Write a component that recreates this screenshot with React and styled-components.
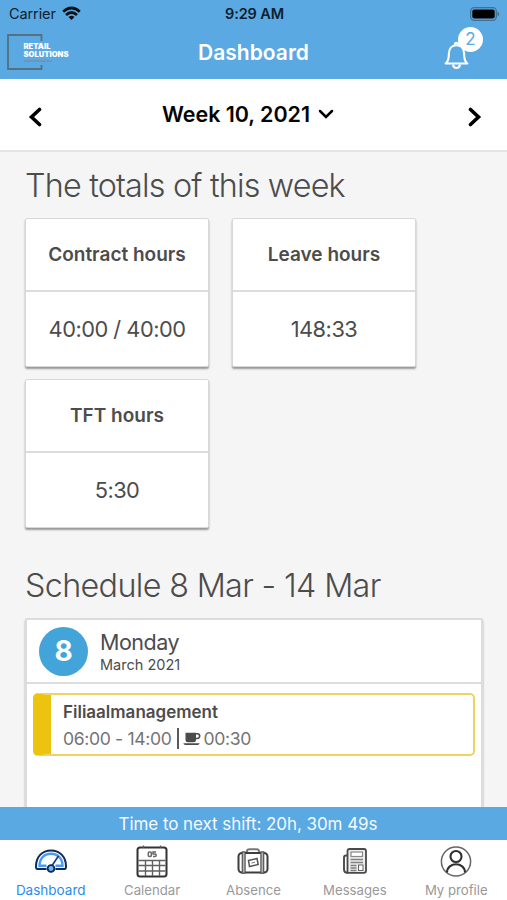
import React from 'react';
import styled, { createGlobalStyle } from 'styled-components';

const GlobalStyle = createGlobalStyle`
  * { box-sizing: border-box; }
  body { margin: 0; background: #f5f5f5; }
  svg { display: block; flex: none; }
`;

const Screen = styled.div`
  display: flex;
  flex-direction: column;
  width: 507px;
  height: 900px;
  overflow: hidden;
  background: #f5f5f5;
  color: #4c4c4c;
  font-family: Inter, 'Liberation Sans', sans-serif;
`;

const Label = styled.span`
  display: block;
  white-space: nowrap;
  font-size: ${(p) => p.$size}px;
  font-weight: ${(p) => p.$weight || 400};
  letter-spacing: ${(p) => p.$track || 0}px;
  line-height: ${(p) => p.$line || p.$size * 1.2}px;
  color: ${(p) => p.$color || 'inherit'};
`;

const Header = styled.header`
  flex: none;
  height: 79px;
  background: #5aa9e2;
`;

const StatusBar = styled.div`
  display: grid;
  grid-template-columns: 1fr auto 1fr;
  align-items: center;
  height: 27px;
  padding: 0 7px 0 9px;
  color: #10202c;
`;

const Carrier = styled.div`
  display: flex;
  align-items: center;
  gap: 6px;
`;

const BatterySlot = styled.div`
  display: flex;
  justify-content: flex-end;
`;

const NavBar = styled.div`
  display: grid;
  grid-template-columns: 1fr auto 1fr;
  align-items: center;
  height: 51px;
  padding: 0 7px;
`;

const Logo = styled.svg`
  margin-bottom: 2px;
  font-family: Inter, sans-serif;
  font-weight: 900;
`;

const BellButton = styled.div`
  position: relative;
  justify-self: end;
  width: 40px;
  height: 50px;
  margin-right: 17px;
  padding: 13px 0 0 1px;
`;

const Badge = styled.span`
  position: absolute;
  top: -1px;
  right: 0;
  display: flex;
  align-items: center;
  justify-content: center;
  width: 25px;
  height: 25px;
  border-radius: 50%;
  background: #fff;
`;

const WeekBar = styled.div`
  flex: none;
  display: flex;
  align-items: center;
  justify-content: space-between;
  height: 73px;
  padding: 4px 25px 0 28px;
  border-bottom: 2px solid #e4e4e4;
  background: #fff;
  color: #050505;
`;

const WeekPicker = styled.div`
  display: flex;
  align-items: center;
  gap: 8px;
  padding: 0 14px 4px 0;
`;

const Content = styled.main`
  flex: 1;
  min-height: 0;
  overflow: hidden;
  padding: 14px 24px 0 25px;
`;

const Totals = styled.section`
  display: grid;
  grid-template-columns: 184px 184px;
  column-gap: 23px;
  row-gap: 12px;
  margin: 12px 0 38px;
`;

const Card = styled.div`
  border: 1px solid #d8d8d8;
  border-radius: 2px;
  background: #fff;
  box-shadow: 0 2px 2px rgba(0, 0, 0, 0.38);
`;

const TotalCard = styled(Card)`
  height: 149px;
`;

const TotalCell = styled.div`
  display: flex;
  align-items: center;
  justify-content: center;
  height: ${(p) => (p.$head ? 73 : 74)}px;
  padding-top: ${(p) => (p.$head ? 1 : 0)}px;
  border-bottom: ${(p) => (p.$head ? '2px solid #dcdcdc' : '0')};
`;

const DayCard = styled(Card)`
  width: 458px;
  height: 220px;
  margin-top: 12px;
  border: 2px solid #dcdcdc;
`;

const DayHead = styled.div`
  display: flex;
  align-items: center;
  gap: 12px;
  height: 64px;
  padding: 0 0 0 12px;
  border-bottom: 2px solid #dcdcdc;
`;

const DayTitle = styled.div`
  padding-top: 2px;
`;

const DayNumber = styled.div`
  display: flex;
  align-items: center;
  justify-content: center;
  width: 49px;
  height: 49px;
  padding-top: 2px;
  border-radius: 50%;
  background: #42a4d8;
`;

const Shift = styled.div`
  height: 63px;
  margin: 9px 6px 0 6px;
  padding: 7px 0 0 12px;
  border: 2px solid #f0d264;
  border-left: 18px solid #ecc30f;
  border-radius: 5px;
`;

const ShiftTimes = styled.div`
  display: flex;
  align-items: center;
  margin-top: 6px;
`;

const Divider = styled.span`
  width: 2px;
  height: 21px;
  margin: 0 4px 0 5px;
  background: #5a5a5a;
`;

const BreakTime = styled.div`
  display: flex;
  align-items: center;
  gap: 3px;
`;

const Countdown = styled.div`
  flex: none;
  display: flex;
  align-items: center;
  justify-content: center;
  height: 33px;
  padding: 1px 11px 0 0;
  background: #5aa9e2;
`;

const TabBar = styled.nav`
  flex: none;
  display: grid;
  grid-template-columns: repeat(5, 1fr);
  height: 60px;
  background: #fff;
`;

const Tab = styled.div`
  display: flex;
  flex-direction: column;
  align-items: center;
  padding-top: 5px;
  gap: 3px;
`;

const WifiIcon = () => (
  <svg width="19" height="15" viewBox="0 0 19 15" fill="none" stroke="#0b1116" strokeWidth="2.7">
    <path d="M1.2 5.7Q9.5-1.7 17.8 5.7" />
    <path d="M4 9Q9.5 4 15 9" />
    <path d="M6.5 11Q9.5 8.7 12.5 11L9.5 14Z" fill="#0b1116" stroke="none" />
  </svg>
);

const BatteryIcon = () => (
  <svg width="30" height="14" viewBox="0 0 30 14">
    <rect x=".7" y=".7" width="25.6" height="12.6" rx="3.5" fill="none" stroke="#3f7192" strokeWidth="1.3" />
    <rect x="2.3" y="2.4" width="22.4" height="9.2" rx="2" fill="#000" />
    <path d="M27.5 4.6Q29.3 5.2 29.3 7T27.5 9.4Z" fill="#3f7192" />
  </svg>
);

const BrandLogo = () => (
  <Logo width="64" height="36" viewBox="0 0 64 36">
    <path d="M34.5 7V1H1v34h33.500v-4" fill="none" stroke="#56707f" strokeWidth="1.800" />
    <path d="M17 27h28" stroke="#718998" strokeWidth="1" />
    <text x="16.500" y="15" fontSize="7" fill="#fff" textLength="27" lengthAdjust="spacingAndGlyphs">RETAIL</text>
    <text x="16.500" y="23" fontSize="7" fill="#fff" textLength="45" lengthAdjust="spacingAndGlyphs">SOLUTIONS</text>
  </Logo>
);

const BellIcon = () => (
  <svg width="26" height="29" viewBox="0 0 26 29" fill="none" stroke="#fff" strokeWidth="2.100" strokeLinejoin="round">
    <path d="M1.600 22.500C5.300 20 4.500 16 5 11.500 5.400 7 8.500 4.200 12.500 4.200S19.600 7 20 11.500C20.500 16 19.700 20 23.400 22.500Z" />
    <path d="M11 4V2.500Q12.500 1 14 2.500V4" />
    <path d="M9 23.500Q9.500 27 12.500 27T16 23.500" />
  </svg>
);

const Chevron = ({ width, height, d, stroke }) => (
  <svg width={width} height={height} viewBox={`0 0 ${width} ${height}`} fill="none" stroke="#000" strokeWidth={stroke} strokeLinecap="round">
    <path d={d} />
  </svg>
);

const CupIcon = () => (
  <svg width="18" height="14" viewBox="0 0 18 14" fill="#4b4b4b">
    <path d="M2.500 .8h10.500v7q0 2.500-2.500 2.500h-5.500Q2.500 10.300 2.500 7.800Z" />
    <path d="M12.500 1.800h1.800q2.400 0 2.400 2.300T14 6.500h-1.500" fill="none" stroke="#4b4b4b" strokeWidth="1.600" />
    <path d="M.3 11.300h16.400q-.6 1.700-2 1.700h-12.400q-1.400 0-2-1.700Z" />
  </svg>
);

const GaugeIcon = () => (
  <svg width="32" height="34" viewBox="0 0 32 34" fill="none" stroke="#0c2c57">
    <path d="M11.500 24H2.500Q1 24 1 21.500C1 12 7 5.500 16 5.500s15 6.500 15 16Q31 24 29.500 24H20.500" fill="#fff" strokeWidth="2" />
    <path d="M11.500 20.800H4.500C4.500 13.500 9 8.800 16 8.800S27.500 13.500 27.500 20.800H20.500" stroke="#4a9bf7" strokeWidth="2.400" />
    <path d="M16 22L23.500 11" stroke="#0f3e7d" strokeWidth="1.600" />
    <circle cx="16" cy="23.500" r="3.400" fill="#75b6ff" strokeWidth="1.900" />
  </svg>
);

const CalendarIcon = () => (
  <svg width="32" height="34" viewBox="0 0 32 34" fill="none" stroke="#333" strokeWidth="2">
    <rect x="1.500" y="2.500" width="29" height="29" rx="2.500" />
    <path d="M7.500 .5v2.500M24.500 .5v2.500" stroke="#555" strokeWidth="1.300" />
    <path d="M2.500 15.500h27M2.500 20.500h27M2.500 26h27M9.500 15.500v15.500M16.500 15.500v15.500M23.500 15.500v15.500" stroke="#606060" strokeWidth="1.400" />
    <rect x="12.300" y="7" width="3" height="4.500" rx="1" stroke="#666" strokeWidth="1.500" />
    <path d="M20 7h-3v2h2.200q1 0 1 1.200t-1.200 1.300h-2" stroke="#666" strokeWidth="1.500" />
  </svg>
);

const SuitcaseIcon = () => (
  <svg width="32" height="34" viewBox="0 0 32 34" fill="none" stroke="#3d3d3d">
    <path d="M10 8V6.500Q10 4.200 12.500 4.200h7Q22 4.200 22 6.500v1.500" stroke="#777" strokeWidth="2" />
    <rect x="1.500" y="8" width="29" height="19.500" rx="3.500" fill="#fff" strokeWidth="2" />
    <path d="M6.700 6.200v22.500M25.300 6.200v22.500" stroke="#555" strokeWidth="4" />
    <path d="M6.700 7.500v20M25.300 7.500v20" stroke="#b5b5b5" strokeWidth="1.600" />
    <path d="M11.500 15.500l8.500-2 1.200 6-8.700 2Z" stroke="#555" strokeWidth="1.500" />
    <path d="M14.500 18l3.500-.8" stroke="#777" />
  </svg>
);

const NewsIcon = () => (
  <svg width="32" height="34" viewBox="0 0 32 34" fill="none" stroke="#4a4a4a">
    <path d="M8.500 10.500H7Q5 10.500 5 12.500v12q0 3.300 3.500 3.300" strokeWidth="1.900" />
    <path d="M8.500 27.800V6q0-2 2-2h14.500q2 0 2 2v19.800q0 2-2 2Z" fill="#eee" strokeWidth="1.800" />
    <rect x="12" y="7" width="11.500" height="4.500" fill="#fff" stroke="#888" strokeWidth="1.200" />
    <path d="M11.500 14.500h12.500M11.500 17.500h12.500M11.500 20.500h6M11.500 23h6M11.500 25.500h6" stroke="#808080" strokeWidth="1.300" />
    <rect x="19.500" y="20" width="4.500" height="5.500" fill="#fff" stroke="#666" />
  </svg>
);

const ProfileIcon = () => (
  <svg width="32" height="34" viewBox="0 0 32 34" fill="none" stroke="#303030">
    <circle cx="16" cy="16.500" r="14.600" stroke="#666" strokeWidth="1.500" />
    <circle cx="16" cy="11.500" r="5.500" strokeWidth="2.100" />
    <path d="M7 27.500C7 16.500 25 16.500 25 27.500" strokeWidth="2.100" />
  </svg>
);

const totals = [
  { name: 'Contract hours', value: '40:00 / 40:00' },
  { name: 'Leave hours', value: '148:33' },
  { name: 'TFT hours', value: '5:30' },
];

const tabs = [
  { name: 'Dashboard', Icon: GaugeIcon, color: '#2b8cf0', size: 13.5 },
  { name: 'Calendar', Icon: CalendarIcon },
  { name: 'Absence', Icon: SuitcaseIcon },
  { name: 'Messages', Icon: NewsIcon },
  { name: 'My profile', Icon: ProfileIcon },
];

export default function App() {
  return (
    <Screen>
      <GlobalStyle />
      <Header>
        <StatusBar>
          <Carrier>
            <Label $size={14.5} $track={-0.1}>Carrier</Label>
            <WifiIcon />
          </Carrier>
          <Label $size={14.5} $weight={600} $track={-0.1}>9:29 AM</Label>
          <BatterySlot><BatteryIcon /></BatterySlot>
        </StatusBar>
        <NavBar>
          <BrandLogo />
          <Label $size={21} $weight={600} $track={0} $color="#fff">Dashboard</Label>
          <BellButton>
            <BellIcon />
            <Badge><Label $size={17} $color="#5aa9e2">2</Label></Badge>
          </BellButton>
        </NavBar>
      </Header>
      <WeekBar>
        <Chevron width={14} height={20} d="M11.500 2.500L3.500 10l8 7.500" stroke={3.6} />
        <WeekPicker>
          <Label $size={21.5} $weight={600} $track={-0.05}>Week 10, 2021</Label>
          <Chevron width={16} height={10} d="M2 2L8 8l6-6" stroke={2.5} />
        </WeekPicker>
        <Chevron width={14} height={20} d="M2.500 2.500L10.500 10l-8 7.500" stroke={3.6} />
      </WeekBar>
      <Content>
        <Label $size={32.3} $weight={300} $track={-0.8} $line={40}>The totals of this week</Label>
        <Totals>
          {totals.map((t) => (
            <TotalCard key={t.name}>
              <TotalCell $head><Label $size={19} $weight={600}>{t.name}</Label></TotalCell>
              <TotalCell><Label $size={21.8} $track={-0.5}>{t.value}</Label></TotalCell>
            </TotalCard>
          ))}
        </Totals>
        <Label $size={32.3} $weight={300} $track={-0.65} $line={40}>Schedule 8 Mar - 14 Mar</Label>
        <DayCard>
          <DayHead>
            <DayNumber><Label $size={28} $weight={700} $color="#fff">8</Label></DayNumber>
            <DayTitle>
              <Label $size={21.5} $track={-0.5} $line={25}>Monday</Label>
              <Label $size={14.5} $track={0} $line={19}>March 2021</Label>
            </DayTitle>
          </DayHead>
          <Shift>
            <Label $size={17} $weight={600} $line={20}>Filiaalmanagement</Label>
            <ShiftTimes>
              <Label $size={17.6} $track={-0.35} $color="#747474">06:00 - 14:00</Label>
              <Divider />
              <BreakTime>
                <CupIcon />
                <Label $size={17.6} $track={-0.35} $color="#747474">00:30</Label>
              </BreakTime>
            </ShiftTimes>
          </Shift>
        </DayCard>
      </Content>
      <Countdown>
        <Label $size={17} $track={-0.06} $color="#f4faff">Time to next shift: 20h, 30m 49s</Label>
      </Countdown>
      <TabBar>
        {tabs.map(({ name, Icon, color, size }) => (
          <Tab key={name}>
            <Icon />
            <Label $size={size || 13.2} $line={16} $color={color || '#999'}>{name}</Label>
          </Tab>
        ))}
      </TabBar>
    </Screen>
  );
}
